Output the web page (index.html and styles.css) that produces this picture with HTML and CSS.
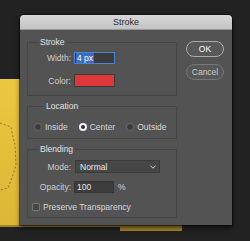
FILE: index.html
```html
<!DOCTYPE html>
<html lang="en">
<head>
  <meta charset="UTF-8" />
  <title>Stroke</title>
  <link rel="stylesheet" href="styles.css">
</head>
<body>

<div id="artwork">
  <svg class="ants" width="182" height="152" viewBox="0 0 182 152">
    <path d="M0 44 L11 48 L13 58 L15 66 L16 86 L13 96 L8 109 L0 111" />
  </svg>
</div>

<div id="dialog">
  <div class="titlebar">Stroke</div>
  <div class="dialog-body">
    <div class="groups">

      <fieldset class="group group-stroke">
        <legend>Stroke</legend>
        <div class="fields">
          <label class="field-label">Width:</label>
          <div class="text-input focused"><span class="selected">4 px</span></div>
          <label class="field-label">Color:</label>
          <div class="swatch"></div>
        </div>
      </fieldset>

      <fieldset class="group group-location">
        <legend>Location</legend>
        <div class="radios">
          <span class="radio-item"><span class="radio"></span>Inside</span>
          <span class="radio-item"><span class="radio checked"></span>Center</span>
          <span class="radio-item"><span class="radio"></span>Outside</span>
        </div>
      </fieldset>

      <fieldset class="group group-blending">
        <legend>Blending</legend>
        <div class="fields fields-blend">
          <label class="field-label">Mode:</label>
          <div class="select">
            <span>Normal</span>
            <svg class="chevron" width="6" height="4" viewBox="0 0 6 4"><path d="M0.5 0.8 L3 3.2 L5.5 0.8" /></svg>
          </div>
          <label class="field-label">Opacity:</label>
          <div class="opacity-cell">
            <div class="text-input">100</div>
            <span class="unit">%</span>
          </div>
        </div>
        <div class="check-row"><span class="checkbox"></span>Preserve Transparency</div>
      </fieldset>

    </div>
    <div class="buttons">
      <button class="btn btn-default">OK</button>
      <button class="btn">Cancel</button>
    </div>
  </div>
</div>

</body>
</html>
```

FILE: styles.css
```css
body {
  margin: 0;
  width: 250px;
  height: 241px;
  overflow: hidden;
  position: relative;
  background: #222;
  font-family: "Liberation Sans", Arial, sans-serif;
  font-size: 8.5px;
  color: #d6d6d6;
}

/* yellow canvas peeking out behind the dialog */
#artwork {
  position: absolute;
  left: 0;
  top: 79px;
  width: 182px;
  height: 152px;
  background: linear-gradient(#ebc741, #dcb636 146px, #a3852b 146px);
  clip-path: polygon(0 0, 100% 0, 100% 100%, 120px 100%, 120px 148px, 0 148px);
}

.ants {
  display: block;
}

.ants path {
  fill: none;
  stroke: #7a6526;
  stroke-width: 0.8;
  stroke-dasharray: 2 2;
}

#dialog {
  position: absolute;
  left: 20px;
  top: 15px;
  width: 212px;
  height: 210px;
  background: #535353;
  border-radius: 4px 4px 0 0;
  box-shadow: 0 0 0 1px rgba(0, 0, 0, 0.45), 0 3px 5px rgba(0, 0, 0, 0.6);
  display: flex;
  flex-direction: column;
}

.titlebar {
  height: 15px;
  box-sizing: border-box;
  border-bottom: 1px solid #979797;
  border-radius: 4px 4px 0 0;
  background: linear-gradient(#d8d8d8, #c3c3c3);
  color: #2b2b2b;
  font-size: 9px;
  line-height: 14px;
  text-align: center;
}

.dialog-body {
  display: flex;
  padding: 7px 8px 7px 7px;
  gap: 9px;
}

.groups {
  width: 150px;
  display: flex;
  flex-direction: column;
  gap: 5px;
}

.group {
  margin: 0;
  padding: 0;
  border: 1px solid #464646;
  min-inline-size: 0;
}

.group legend {
  margin-left: 10px;
  padding: 0 2px;
  line-height: 10px;
  color: #e2e2e2;
}

.group-stroke {
  padding: 5px 0 8px;
}

.group-location {
  padding: 11px 0 6px 6px;
}

.group-blending {
  padding: 6px 0 6px;
}

.fields {
  display: grid;
  grid-template-columns: 43px auto;
  column-gap: 3px;
  row-gap: 10px;
  align-items: center;
}

.fields-blend {
  row-gap: 8px;
}

.field-label {
  text-align: right;
  color: #cfcfcf;
}

.text-input {
  width: 41px;
  height: 12px;
  box-sizing: border-box;
  background: #3c3c3c;
  border: 1px solid #363636;
  color: #e6e6e6;
  line-height: 10px;
  padding-left: 2px;
}

.text-input.focused {
  border-color: #4a84d8;
  padding-left: 1px;
}

.selected {
  background: #3b6cc0;
  color: #fff;
  padding: 0 1px;
}

.swatch {
  width: 41px;
  height: 13px;
  box-sizing: border-box;
  background: #df3838;
  border: 1px solid #3a3a3a;
}

.radios {
  display: flex;
  gap: 11px;
  height: 10px;
  align-items: center;
}

.radio-item {
  display: flex;
  align-items: center;
  gap: 3px;
}

.radio {
  width: 8px;
  height: 8px;
  box-sizing: border-box;
  border-radius: 50%;
  border: 1px solid #6c6c6c;
  background: #3a3a3a;
}

.radio.checked {
  border: 2.5px solid #f2f2f2;
  background: #2e2e2e;
}

.select {
  margin-left: 1px;
  width: 85px;
  height: 13px;
  box-sizing: border-box;
  background: #464646;
  border: 1px solid #3b3b3b;
  display: flex;
  align-items: center;
  justify-content: space-between;
  padding: 0 3px 0 4px;
  color: #e6e6e6;
}

.chevron path {
  fill: none;
  stroke: #cfcfcf;
  stroke-width: 1;
}

.opacity-cell {
  display: flex;
  align-items: center;
  gap: 4px;
}

.opacity-cell .text-input {
  width: 40px;
}

.unit {
  color: #d6d6d6;
}

.check-row {
  display: flex;
  align-items: center;
  gap: 3px;
  margin: 10px 0 0 4px;
  height: 8px;
}

.checkbox {
  width: 8px;
  height: 8px;
  box-sizing: border-box;
  border: 1px solid #767676;
  border-radius: 1px;
  background: #474747;
}

.buttons {
  display: flex;
  flex-direction: column;
  gap: 7px;
  padding-top: 4px;
}

.btn {
  width: 38px;
  height: 16px;
  margin: 0;
  padding: 0;
  border-radius: 8px;
  border: 1px solid #ababab;
  background: #585858;
  color: #f0f0f0;
  font-family: inherit;
  font-size: 8.5px;
}

.btn-default {
  color: #fff;
}

.btn + .btn {
  border-color: #767676;
  color: #cacaca;
}
```
